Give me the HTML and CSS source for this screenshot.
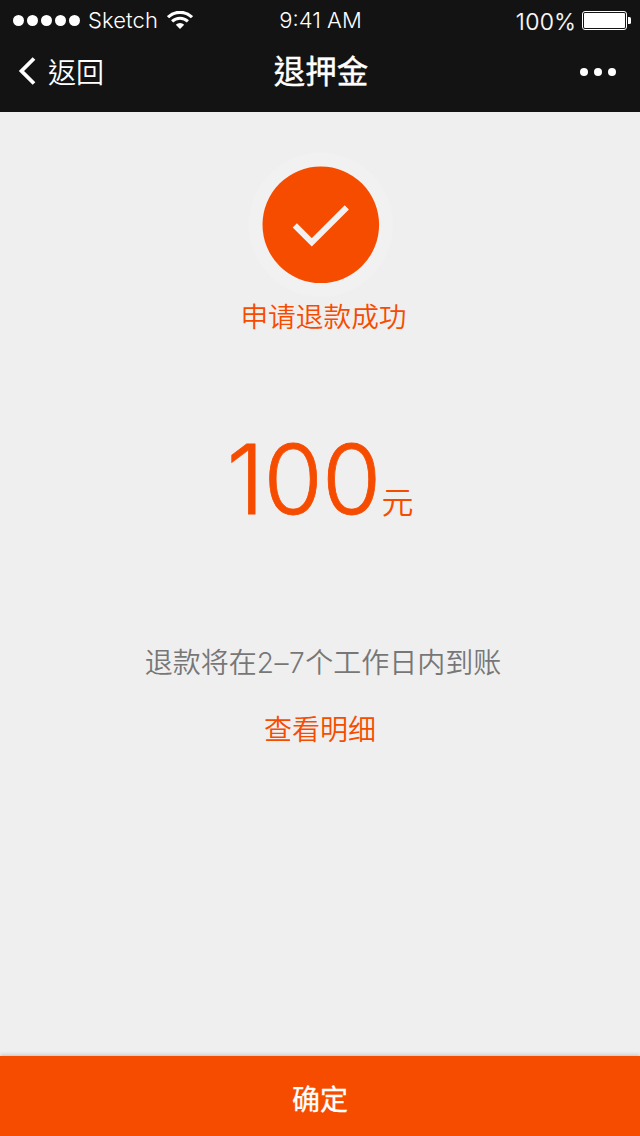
FILE: index.html
```html
<!DOCTYPE html>
<html lang="zh-CN">
<head>
<meta charset="utf-8">
<title>退押金</title>
<link rel="stylesheet" href="styles.css">
</head>
<body>
<div class="screen">
  <header class="header">
    <div class="status">
      <div class="carrier">
        <span class="signal"><i></i><i></i><i></i><i></i><i></i></span>
        <span class="carrier-name">Sketch</span>
        <svg class="wifi" width="26" height="18" viewBox="0 0 26 18" fill="none" stroke="#fff">
          <path d="M1 6.200a17.200 17.200 0 0 1 24 0" stroke-width="3.200"/>
          <path d="M5.100 10.400a11.300 11.300 0 0 1 15.800 0" stroke-width="3"/>
          <path d="M13 18l-4.200-4.200a6 6 0 0 1 8.400 0z" fill="#fff" stroke="none"/>
        </svg>
      </div>
      <span class="time">9:41 AM</span>
      <div class="power">
        <span class="percent">100%</span>
        <svg class="battery" width="49" height="19" viewBox="0 0 49 19">
          <rect x=".5" y=".5" width="44" height="18" rx="2.5" fill="none" stroke="#fff"/>
          <rect x="2" y="2" width="41" height="15" rx="1" fill="#fff"/>
          <path d="M46 6h1.500q1.500 0 1.500 1.500v4q0 1.500-1.500 1.500H46z" fill="#fff"/>
        </svg>
      </div>
    </div>
    <nav class="nav">
      <a class="back">
        <svg width="18" height="28" viewBox="0 0 18 28" fill="none" stroke="#fff" stroke-width="3.800"><path d="M16 1.500L3.500 14l12.500 12.500"/></svg>
        <span lang="zh-TW">返回</span>
      </a>
      <h1 class="title" lang="zh-TW">退押金</h1>
      <span class="more"><i></i><i></i><i></i></span>
    </nav>
  </header>
  <main class="content">
    <svg class="success" width="146" height="146" viewBox="0 0 146 146">
      <circle cx="72.800" cy="72.800" r="72" fill="#f1f1f1"/>
      <circle cx="72.800" cy="72.800" r="58.300" fill="#f64c00"/>
      <path d="M47 73.500L64 90.500L99 55.500" transform="translate(-.2 -.2)" fill="none" stroke="#f1f1f1" stroke-width="6"/>
    </svg>
    <p class="result">申请退款成功</p>
    <p class="amount"><span class="number">100</span><span class="unit">元</span></p>
    <p class="hint">退款将在<span class="days">2–7</span>个工作日内到账</p>
    <a class="detail">查看明细</a>
  </main>
  <button class="confirm">确定</button>
</div>
</body>
</html>
```
FILE: styles.css
```css
* { box-sizing: border-box; }
body { margin: 0; }
h1, p { margin: 0; font-weight: 400; }
.screen {
  width: 640px;
  height: 1136px;
  display: flex;
  flex-direction: column;
  background: #efefef;
  font-family: "Noto Sans CJK SC", sans-serif;
  color: #f64c00;
}
.header { height: 112px; background: #131313; color: #fff; }
.status {
  height: 40px;
  display: grid;
  grid-template-columns: 1fr auto 1fr;
  align-items: center;
  padding: 0 9px 0 13px;
  font: 300 22px/40px Inter, sans-serif;
}
.carrier { display: flex; align-items: center; }
.signal { display: flex; gap: 3px; margin-right: 8px; padding-bottom: 2px; }
.signal i { width: 11px; height: 11px; border-radius: 50%; background: #fff; }
.carrier-name { letter-spacing: 0.1px; padding-bottom: 3px; }
.wifi { margin: 0 0 4px 9px; }
.time { letter-spacing: 0; padding: 0 3px 3px 0; }
.power { display: flex; align-items: center; justify-content: flex-end; }
.percent { font-size: 23px; letter-spacing: 0.3px; margin-right: 6px; -webkit-text-stroke: 0.2px currentColor; }
.battery { margin-bottom: 2px; }
.nav {
  height: 72px;
  display: grid;
  grid-template-columns: 1fr auto 1fr;
  padding: 0 24px 0 18px;
}
.back {
  display: flex;
  align-items: center;
  gap: 12px;
  height: 62px;
  font: 350 28px/62px "Noto Sans CJK TC", sans-serif;
}
.title {
  padding-left: 8px;
  font: 400 31.5px/58px "Noto Sans CJK TC", sans-serif;
  -webkit-text-stroke: 0.4px currentColor;
}
.more { display: flex; justify-content: flex-end; align-items: center; gap: 6px; height: 64px; }
.more i { width: 8px; height: 8px; border-radius: 50%; background: #fff; }
.content { flex: 1; display: flex; flex-direction: column; align-items: center; padding-top: 40px; }
.success { margin-left: 2px; }
.result { margin: -3px 0 0 7px; font-size: 27.7px; line-height: 40px; font-weight: 350; }
.amount { display: flex; align-items: baseline; margin-top: 84px; height: 120px; line-height: 120px; }
.number { font-family: Inter, sans-serif; font-size: 96px; font-weight: 300; letter-spacing: -0.8px; -webkit-text-stroke: 0.8px currentColor; }
.unit { font-size: 32px; margin-left: 1px; font-weight: 350; }
.hint { margin: 102px 0 0 6px; font-size: 28px; line-height: 40px; color: #777; font-weight: 350; }
.days { font-family: Inter, sans-serif; font-weight: 300; letter-spacing: 0.6px; }
.detail { margin-top: 25px; font-size: 28px; line-height: 40px; font-weight: 350; }
.confirm {
  height: 80px;
  border: 0;
  padding: 4px 0 0;
  background: #f64c00;
  color: #fff;
  font: 400 28px/40px "Noto Sans CJK SC", sans-serif;
  -webkit-text-stroke: 0.3px currentColor;
  box-shadow: 0 -1px 4px rgba(0, 0, 0, .2);
}
```
